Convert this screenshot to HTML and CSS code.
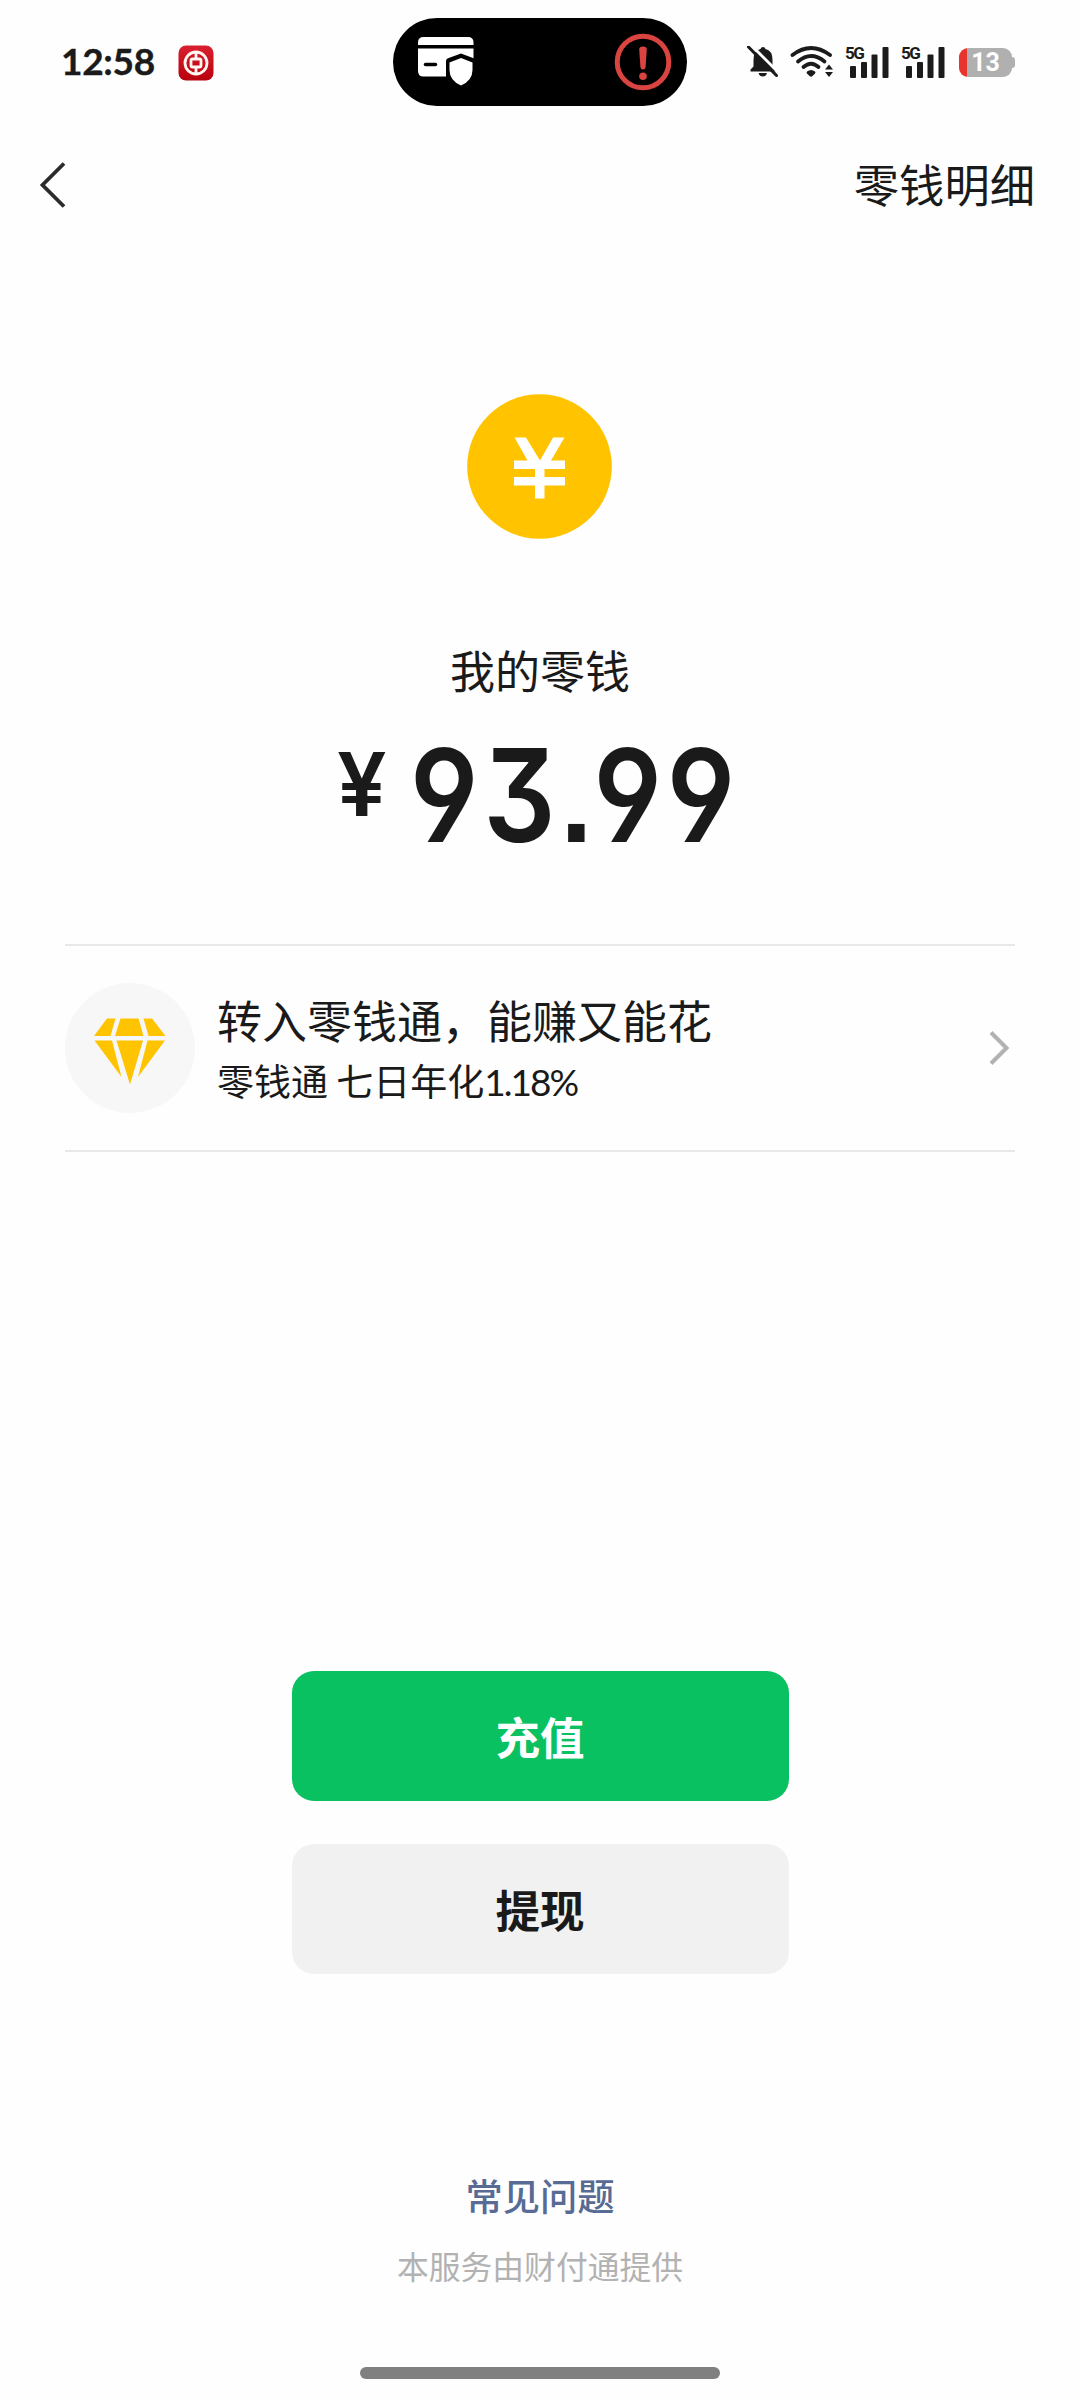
FILE: index.html
```html
<!DOCTYPE html>
<html lang="zh-CN">
<head>
<meta charset="utf-8">
<title>我的零钱</title>
<link rel="stylesheet" href="styles.css">
</head>
<body>
<div class="screen">
  <header class="status">
    <div class="status-left">
      <span class="clock">12:58</span>
      <svg class="bank" width="36" height="36" viewBox="0 0 36 36">
        <defs><linearGradient id="red" x1="0" y1="0" x2="0" y2="1"><stop offset="0" stop-color="#d9202e"/><stop offset="1" stop-color="#b8000f"/></linearGradient></defs>
        <rect x=".5" y=".5" width="35" height="35" rx="7.5" fill="url(#red)"/>
        <g fill="none" stroke="#fff5f0" stroke-width="2.8"><circle cx="18" cy="18" r="11"/><rect x="13" y="14" width="10" height="8" rx="1.5"/><path d="M18 7v7M18 22v7"/></g>
      </svg>
    </div>
    <div class="island">
      <svg width="58" height="52" viewBox="0 0 58 52">
        <path d="M1 9V6.500Q1 1 6.500 1H51Q56.500 1 56.500 6.500V9ZM1 12.500H56.500V35Q56.500 40.500 51 40.500H6.500Q1 40.500 1 35Z" fill="#fff"/>
        <path d="M8.500 28.500H18.500" stroke="#000" stroke-width="3.500" stroke-linecap="round"/>
        <path d="M44 17.500L59 23V42H29V25Q29 23 31 22.300Z" fill="#000"/>
        <path d="M44 22L55.500 26.500V34Q55.500 44.500 44 49.500Q32.500 44.500 32.500 34V26.500Z" fill="#fff"/>
      </svg>
      <svg width="58" height="58" viewBox="0 0 58 58">
        <circle cx="29" cy="29" r="25.800" fill="none" stroke="#d94340" stroke-width="5"/>
        <path d="M25.200 16.500Q25.200 13.500 29 13.500T32.800 16.500L31.600 34Q31.300 36.500 29 36.500T26.400 34Z" fill="#d94340"/>
        <circle cx="29" cy="43.200" r="3.800" fill="#d94340"/>
      </svg>
    </div>
    <div class="status-right">
      <svg class="bell" width="32" height="32" viewBox="0 0 32 32">
        <path d="M3.500 25.500V23.500L6.500 20.500V14Q6.500 4.500 13.500 3Q14 1 16 1T18.500 3Q25.500 4.500 25.500 14V20.500L28.500 23.500V25.500Z" fill="#1b1b1b"/>
        <path d="M11.500 27H20Q19 30.500 15.750 30.500T11.500 27Z" fill="#1b1b1b"/>
        <path d="M3.500-1.500L32 27" stroke="#fff" stroke-width="3"/>
        <path d="M1.500 1L29.500 29.500" stroke="#1b1b1b" stroke-width="3" stroke-linecap="round"/>
      </svg>
      <svg class="wifi" width="44" height="32" viewBox="0 0 44 32">
        <g fill="none" stroke="#1b1b1b" stroke-width="3.800" stroke-linecap="round"><path d="M2.500 9Q21 -5 40 9"/><path d="M8 15.500Q21 4.500 34.500 15.500"/><path d="M13.500 21Q21 14.500 28.500 21"/></g>
        <path d="M17 25.500Q21 22.500 25 25.500Q26 26.500 25 27.500L22.500 30Q21 31.500 19.500 30L17 27.500Q16 26.500 17 25.500Z" fill="#1b1b1b"/>
        <path d="M39 18.500L43 23.500H35ZM35 26H43L39 31Z" fill="#1b1b1b"/>
      </svg>
      <div class="signal"><span class="net">5G</span><svg width="40" height="32" viewBox="0 0 40 32" fill="#1b1b1b"><rect x="0" y="20" width="6" height="12" rx="1"/><rect x="11" y="16" width="6" height="16" rx="1"/><rect x="21.500" y="8.500" width="6" height="23.500" rx="1"/><rect x="32.500" y="1" width="6" height="31" rx="1"/></svg></div>
      <div class="signal second"><span class="net">5G</span><svg width="40" height="32" viewBox="0 0 40 32" fill="#1b1b1b"><rect x="0" y="20" width="6" height="12" rx="1"/><rect x="11" y="16" width="6" height="16" rx="1"/><rect x="21.500" y="8.500" width="6" height="23.500" rx="1"/><rect x="32.500" y="1" width="6" height="31" rx="1"/></svg></div>
      <div class="battery"><span>13</span></div><i class="nub"></i>
    </div>
  </header>

  <nav class="nav">
    <svg width="28" height="48" viewBox="0 0 28 48"><path d="M25 2.500L3.500 24L25 45.500" fill="none" stroke="#2b2b2b" stroke-width="3.800"/></svg>
    <a class="detail">零钱明细</a>
  </nav>

  <main class="main">
    <svg class="coin" width="146" height="146" viewBox="0 0 146 146">
      <circle cx="72.500" cy="72.500" r="72.300" fill="#ffc300"/>
      <path d="M47.500 43.500H59L73 66.500L86 43.500H97.500L84 66.500H98V75H77.500V83H98V91.500H77.500V104.500H68V91.500H47V83H68V75H47V66.500H60.500Z" fill="#fff"/>
    </svg>
    <h1 class="label">我的零钱</h1>
    <p class="amount"><span class="yen">¥</span><span class="num">93.99</span></p>

    <section class="promo">
      <svg width="130" height="130" viewBox="0 0 130 130">
        <circle cx="65" cy="65" r="65" fill="#f7f7f7"/>
        <g fill="#ffc300"><path d="M42 35.500H50.500L45.500 53H29ZM55.500 35.500H73.500L78.500 53H50ZM78.500 35.500H87L100.500 53H83.500ZM29.500 57.500H47L56.500 94ZM51.500 57.500H78L65 101.500ZM82.500 57.500H100L73 94Z"/></g>
      </svg>
      <div class="promo-text"><h2>转入零钱通，能赚又能花</h2><p>零钱通 七日年化<span class="rate">1.18%</span></p></div>
      <svg class="arrow" width="22" height="36" viewBox="0 0 22 36"><path d="M3 2.500L18.500 18L3 33.500" fill="none" stroke="#b2b2b2" stroke-width="4"/></svg>
    </section>
  </main>

  <div class="actions"><button class="btn primary">充值</button><button class="btn">提现</button></div>

  <footer class="footer"><a class="faq">常见问题</a><p>本服务由财付通提供</p></footer>
  <div class="homebar"></div>
</div>
</body>
</html>
```
FILE: styles.css
```css
* { box-sizing: border-box; }
body, h1, h2, p { margin: 0; }
body { background: #fff; color: #1a1a1a; font-family: "Noto Sans CJK SC", sans-serif; }
svg { display: block; flex: none; }
.screen { width: 1080px; height: 2400px; display: flex; flex-direction: column; align-items: center; background: #fefefe; overflow: hidden; }

.status { width: 1080px; height: 124px; display: grid; grid-template-columns: 393px 294px 1fr; align-items: center; }
.status-left { display: flex; align-items: center; padding-left: 61px; gap: 23px; }
.clock { width: 94px; font: 700 37px/40px Lato, sans-serif; -webkit-text-stroke: .4px #1a1a1a; letter-spacing: -.3px; margin-bottom: 2px; white-space: nowrap; }
.bank { margin-top: 1px; }
.island { height: 88px; border-radius: 44px; background: #000; display: flex; justify-content: space-between; align-items: center; padding: 0 15px 0 24px; }
.status-right { display: flex; align-items: center; padding-left: 60px; }
.wifi { margin-left: 11px; }
.signal { width: 44px; margin-left: 11px; height: 32px; display: grid; }
.signal > * { grid-area: 1 / 1; }
.signal svg { margin-left: 5px; }
.signal.second { margin-left: 12px; }
.net { font: 700 17px/14px Roboto, sans-serif; letter-spacing: -1.5px; }
.battery { width: 53px; height: 29px; margin-left: 14px; border-radius: 9px; background: linear-gradient(90deg, #e8342c 8px, #b0b0b0 8px); color: #fff; font: 700 25px/29px Roboto, sans-serif; text-align: center; }
.nub { width: 3px; height: 11px; border-radius: 0 3px 3px 0; background: #b0b0b0; }

.nav { width: 1080px; height: 122px; padding: 0 45px 0 39px; display: flex; align-items: center; justify-content: space-between; }
.detail { font-size: 45.300px; line-height: 66px; margin-bottom: 5px; }

.main { width: 950px; display: flex; flex-direction: column; align-items: center; }
.coin { margin-top: 148px; }
.label { margin-top: 97px; font-size: 45px; line-height: 66px; font-weight: 400; }
.amount { width: 950px; padding-left: 272px; margin-top: 29px; height: 130px; display: flex; line-height: 130px; font-family: Inter, sans-serif; font-weight: 600; white-space: nowrap; }
.yen { width: 73px; font-size: 88px; line-height: 104px; }
.num { font-size: 129px; line-height: 127px; font-feature-settings: "cv04", "cv09", "ss07"; letter-spacing: 5.500px; transform: scaleX(.88); transform-origin: 0 50%; }
.promo { width: 950px; height: 208px; margin-top: 82px; border-top: 2px solid #e8e8e8; border-bottom: 2px solid #e8e8e8; display: flex; align-items: center; }
.promo-text { flex: 1; padding: 4px 0 0 22px; }
h2 { font-size: 45px; line-height: 62px; font-weight: 400; }
.promo-text p { font-size: 37px; line-height: 58px; }
.rate { font-family: Lato, sans-serif; letter-spacing: -2px; }
.arrow { margin-right: 5px; }

.actions { margin-top: 519px; display: flex; flex-direction: column; gap: 43px; }
.btn { width: 497px; height: 130px; border: 0; border-radius: 22px; background: #f1f1f1; color: #1a1a1a; font: 700 44.500px/66px "Noto Sans CJK SC", sans-serif; }
.primary { background: #09c160; color: #fff; }

.footer { margin-top: 194px; text-align: center; }
.faq { display: block; font-size: 37.300px; line-height: 54px; font-weight: 500; color: #576b95; }
.footer p { margin-top: 20px; font-size: 31.800px; line-height: 46px; color: #b2b2b2; }
.homebar { width: 360px; height: 12px; margin-top: auto; margin-bottom: 21px; border-radius: 6px; background: #808080; }
```
